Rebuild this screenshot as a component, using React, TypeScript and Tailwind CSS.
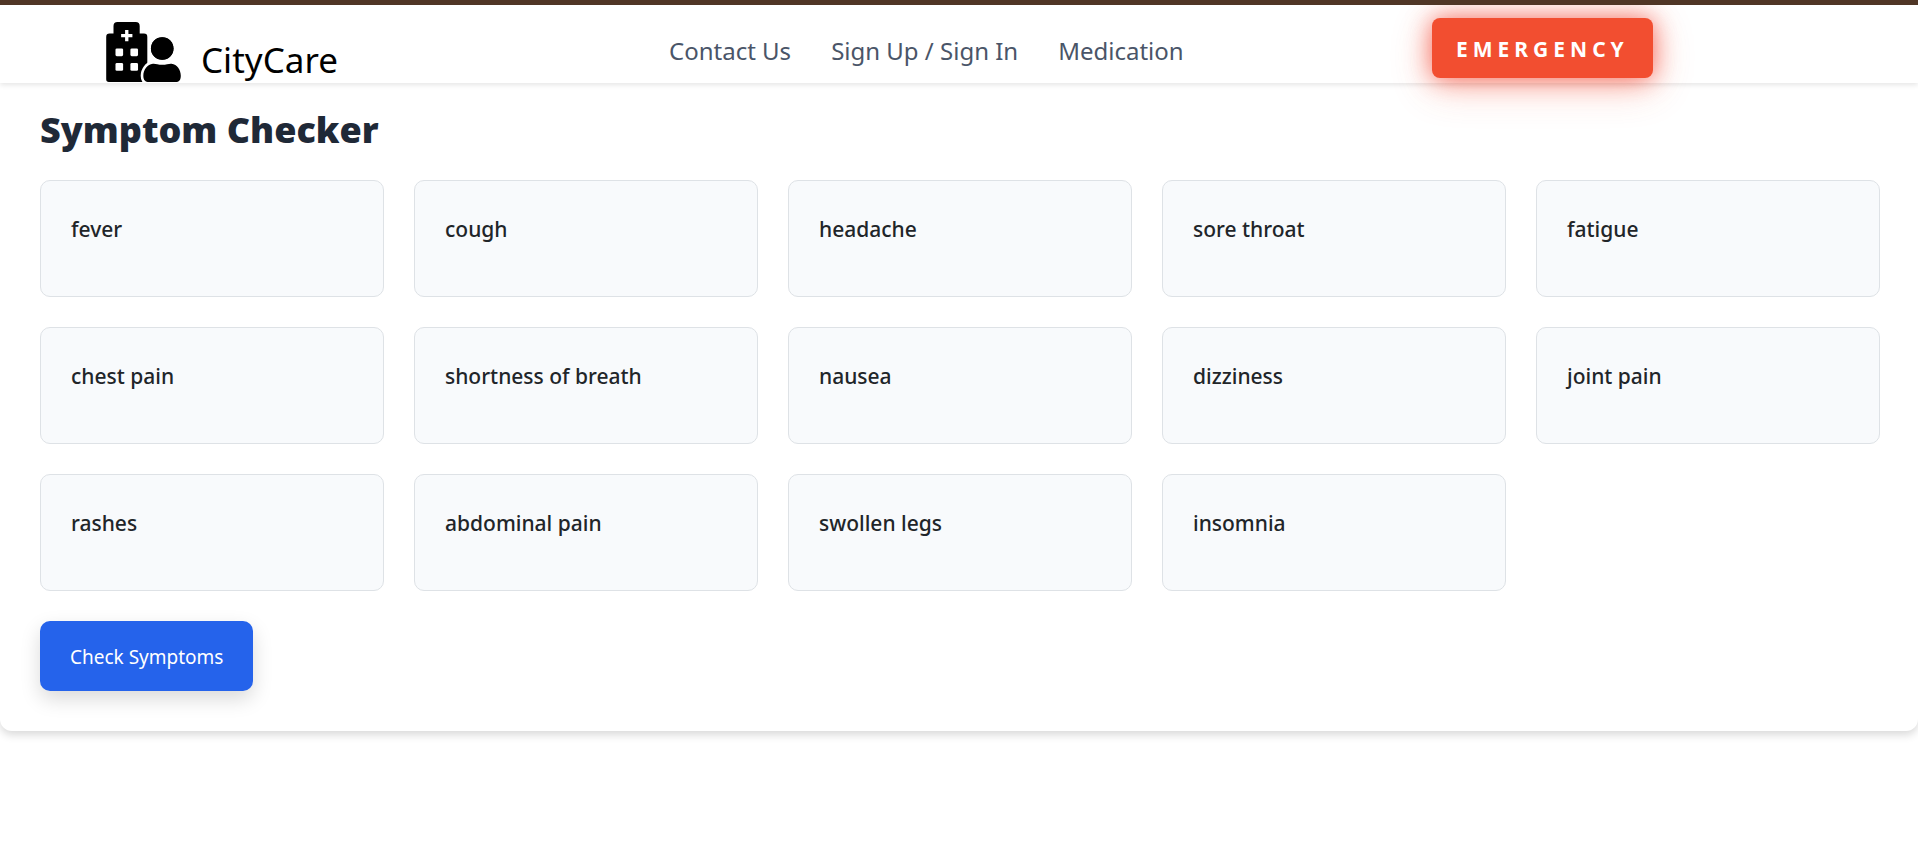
import React, { useState } from 'react';

const symptoms = [
  'fever',
  'cough',
  'headache',
  'sore throat',
  'fatigue',
  'chest pain',
  'shortness of breath',
  'nausea',
  'dizziness',
  'joint pain',
  'rashes',
  'abdominal pain',
  'swollen legs',
  'insomnia',
];

const navLinks = [
  { label: 'Contact Us', href: '#contact' },
  { label: 'Sign Up / Sign In', href: '#login' },
  { label: 'Medication', href: '#medication' },
];

const Logo: React.FC = () => (
  <svg viewBox="0 0 225 181" className="h-[60px] w-[75px] shrink-0" aria-hidden="true">
    <path d="M0 45q0-10 10-10h12V12Q22 0 34 0h55q12 0 12 12v23h13q10 0 10 10v136H8q-8 0-8-8z" />
    <path d="M57 24h10v12h12v10H67v12H57V46H45V36h12z" fill="#fff" />
    <g fill="#fff">
      <rect x="28" y="80" width="23" height="23" rx="4" />
      <rect x="73" y="80" width="23" height="23" rx="4" />
      <rect x="28" y="124" width="23" height="23" rx="4" />
      <rect x="73" y="124" width="23" height="23" rx="4" />
    </g>
    {/* person in front of the building */}
    <g stroke="#fff" strokeWidth="16" paintOrder="stroke">
      <circle cx="169" cy="80" r="34" />
      <path d="M141 126c7-1 15 3 28 3s21-4 28-3c17 1 28 19 28 36 0 13-5 19-16 19h-80c-11 0-17-6-17-19 0-17 12-35 29-36z" />
    </g>
    <circle cx="169" cy="80" r="34" />
  </svg>
);

const Header: React.FC = () => (
  <header className="relative z-10 grid h-[78px] grid-cols-[669fr_763fr_486fr] items-center bg-white shadow-[0_2px_5px_rgba(0,0,0,0.1)]">
    <a href="#home" className="ml-[106px] flex items-end gap-5 self-end pb-px text-black">
      <Logo />
      <span className="text-[35px] leading-[44px]">CityCare</span>
    </a>
    <nav className="flex gap-10 pt-3.5 text-2xl text-[#4a5568]">
      {navLinks.map(link => (
        <a key={link.label} href={link.href} className="whitespace-nowrap hover:text-slate-900">
          {link.label}
        </a>
      ))}
    </nav>
    <button
      type="button"
      className="mt-2 h-[60px] justify-self-start rounded-lg bg-[#f24e30] px-6 pt-1 text-[21px] font-bold tracking-[5px] text-white shadow-[0_8px_40px_rgba(242,78,48,0.3),0_0_24px_rgba(242,48,30,0.65)]"
    >
      EMERGENCY
    </button>
  </header>
);

const App: React.FC = () => {
  const [selected, setSelected] = useState<string[]>([]);

  const toggleSymptom = (symptom: string) => {
    setSelected(prev =>
      prev.includes(symptom) ? prev.filter(s => s !== symptom) : [...prev, symptom]
    );
  };

  return (
    <div className="min-h-screen bg-white font-['Noto_Sans',sans-serif]">
      <div className="relative z-20 h-[5px] bg-[#503626]" />
      <Header />
      <main className="rounded-b-xl bg-white pt-[22px] pr-[38px] pb-10 pl-10 shadow-[0_4px_8px_rgba(0,0,0,0.15)]">
        <h1 className="mb-[26px] text-4xl leading-[49px] font-black text-[#1f2937]">Symptom Checker</h1>
        <div className="grid grid-cols-5 gap-[30px]">
          {symptoms.map(symptom => (
            <button
              key={symptom}
              type="button"
              aria-pressed={selected.includes(symptom)}
              onClick={() => toggleSymptom(symptom)}
              className="h-[117px] rounded-[10px] border border-[#dee2e6] bg-slate-50 px-[30px] pb-[18px] text-left text-[21px] font-medium text-[#212529] aria-pressed:border-blue-600"
            >
              {symptom}
            </button>
          ))}
        </div>
        <button
          type="button"
          className="mt-[30px] h-[70px] rounded-[10px] bg-[#2563eb] px-[30px] pt-0.5 text-[19px] text-white shadow-[0_8px_20px_rgba(0,0,0,0.15)] hover:bg-blue-700"
        >
          Check Symptoms
        </button>
      </main>
    </div>
  );
};

export default App;
